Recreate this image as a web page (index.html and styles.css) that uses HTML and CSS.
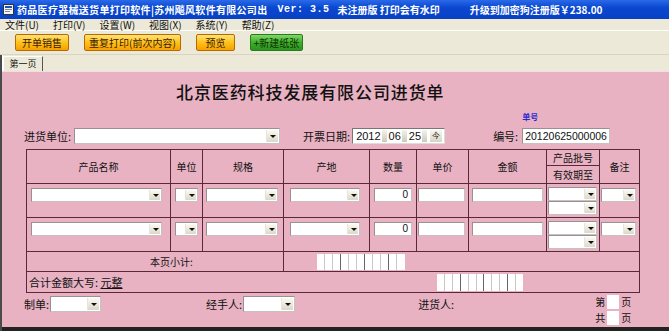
FILE: index.html
```html
<!DOCTYPE html>
<html lang="zh">
<head>
    <meta charset="UTF-8">
    <title>药品医疗器械送货单打印软件</title>
    <link rel="stylesheet" href="styles.css">
</head>
<body>

    <div class="titlebar">
        <svg class="app-icon" width="11" height="11" viewBox="0 0 11 11">
            <rect x="0.5" y="0.5" width="10" height="10" fill="#f4f4f4" stroke="#333"/>
            <rect x="2" y="2" width="7" height="2" fill="#2050c0"/>
            <rect x="2" y="5" width="7" height="1" fill="#888"/>
            <rect x="2" y="7" width="5" height="1" fill="#888"/>
        </svg>
        <span class="t-name">药品医疗器械送货单打印软件|苏州飚风软件有限公司出</span>
        <span class="t-ver">Ver: 3.5</span>
        <span class="t-reg">未注册版 打印会有水印</span>
        <span class="t-up">升级到加密狗注册版￥238.00</span>
    </div>

    <div class="menubar">
        <span>文件(U)</span>
        <span>打印(V)</span>
        <span>设置(W)</span>
        <span>视图(X)</span>
        <span>系统(Y)</span>
        <span>帮助(Z)</span>
    </div>

    <div class="toolbar">
        <button class="btn w54">开单销售</button>
        <button class="btn w97">重复打印(前次内容)</button>
        <button class="btn w39">预览</button>
        <button class="btn green w53">+新建纸张</button>
    </div>

    <div class="frame">
        <div class="tabs">
            <div class="tab">第一页</div>
        </div>

        <div class="panel">
            <h1 class="doc-title">北京医药科技发展有限公司进货单</h1>

            <div class="info">
                <span class="lbl">进货单位:</span>
                <div class="sel w206"><span class="arr"></span></div>
                <span class="lbl date-lbl">开票日期:</span>
                <div class="date">
                    <span>2012</span><span class="spin"></span>
                    <span>06</span><span class="spin"></span>
                    <span>25</span><span class="spin"></span>
                    <span class="today">今</span>
                </div>
                <span class="lbl no-lbl">编号:</span>
                <div class="no-wrap">
                    <span class="no-tag">单号</span>
                    <div class="inp no-inp">20120625000006</div>
                </div>
            </div>

            <table class="grid">
                <colgroup>
                    <col style="width:144px">
                    <col style="width:32px">
                    <col style="width:81px">
                    <col style="width:86px">
                    <col style="width:47px">
                    <col style="width:52px">
                    <col style="width:78px">
                    <col style="width:53px">
                    <col style="width:40px">
                </colgroup>
                <tr class="head">
                    <th rowspan="2">产品名称</th>
                    <th rowspan="2">单位</th>
                    <th rowspan="2">规格</th>
                    <th rowspan="2">产地</th>
                    <th rowspan="2">数量</th>
                    <th rowspan="2">单价</th>
                    <th rowspan="2">金额</th>
                    <th>产品批号</th>
                    <th rowspan="2">备注</th>
                </tr>
                <tr class="head2">
                    <th>有效期至</th>
                </tr>
                <tr class="item">
                    <td><div class="sel c-name"><span class="arr"></span></div></td>
                    <td><div class="sel c-unit"><span class="arr"></span></div></td>
                    <td><div class="sel c-spec"><span class="arr"></span></div></td>
                    <td><div class="sel c-place"><span class="arr"></span></div></td>
                    <td><div class="inp c-qty">0</div></td>
                    <td><div class="inp c-price"></div></td>
                    <td><div class="inp c-amount"></div></td>
                    <td class="batch">
                        <div class="sel c-batch"><span class="arr"></span></div>
                        <div class="sel c-batch"><span class="arr"></span></div>
                    </td>
                    <td><div class="sel c-note"><span class="arr"></span></div></td>
                </tr>
                <tr class="item">
                    <td><div class="sel c-name"><span class="arr"></span></div></td>
                    <td><div class="sel c-unit"><span class="arr"></span></div></td>
                    <td><div class="sel c-spec"><span class="arr"></span></div></td>
                    <td><div class="sel c-place"><span class="arr"></span></div></td>
                    <td><div class="inp c-qty">0</div></td>
                    <td><div class="inp c-price"></div></td>
                    <td><div class="inp c-amount"></div></td>
                    <td class="batch">
                        <div class="sel c-batch"><span class="arr"></span></div>
                        <div class="sel c-batch"><span class="arr"></span></div>
                    </td>
                    <td><div class="sel c-note"><span class="arr"></span></div></td>
                </tr>
                <tr class="sub">
                    <td colspan="3" class="sub-lbl">本页小计:</td>
                    <td colspan="6">
                        <div class="digits sub-digits">
                            <i></i><i></i><i class="k"></i><i></i><i></i><i class="k"></i><i></i><i></i><i class="k"></i><i></i><i></i>
                        </div>
                    </td>
                </tr>
                <tr class="total">
                    <td colspan="9">
                        <div class="total-row">
                            <span>合计金额大写: <u>元整</u></span>
                            <div class="digits total-digits">
                                <i></i><i></i><i class="k"></i><i></i><i></i><i class="k"></i><i></i><i></i><i class="k"></i><i></i><i></i>
                            </div>
                        </div>
                    </td>
                </tr>
            </table>

            <div class="foot">
                <span class="lbl">制单:</span>
                <div class="sel w51"><span class="arr"></span></div>
                <span class="lbl f-hand">经手人:</span>
                <div class="sel w52"><span class="arr"></span></div>
                <span class="lbl f-recv">进货人:</span>
                <div class="pages">
                    <div class="pg">第<span class="pg-box"></span>页</div>
                    <div class="pg">共<span class="pg-box"></span>页</div>
                </div>
            </div>
        </div>
    </div>

</body>
</html>
```

FILE: styles.css
```css
body {
    margin: 0;
    width: 669px;
    height: 331px;
    overflow: hidden;
    background-color: #ece9d8;
    font-family: "Noto Sans CJK SC", "Liberation Sans", sans-serif;
    font-size: 11px;
    color: #111;
}

/* title bar */
.titlebar {
    height: 19px;
    display: flex;
    align-items: center;
    background: linear-gradient(#2a6ae8, #0a48d0 40%, #0840c4);
    color: #fff;
    font-size: 10px;
    font-weight: bold;
    white-space: nowrap;
    padding-left: 3px;
}
.app-icon { margin-right: 3px; }
.t-name { letter-spacing: 0.3px; }
.t-ver { margin-left: 10px; font-family: "Liberation Mono", monospace; font-size: 10px; letter-spacing: 0.5px; }
.t-reg { margin-left: 8px; }
.t-up { margin-left: 30px; }

/* menu */
.menubar {
    height: 11px;
    display: flex;
    align-items: center;
    gap: 14px;
    padding-left: 5px;
    font-size: 10px;
    line-height: 11px;
    border-bottom: 1px solid #fff;
}

/* toolbar */
.toolbar {
    height: 23px;
    display: flex;
    align-items: center;
    gap: 15px;
    padding-left: 15px;
    border-bottom: 1px solid #d8d4c0;
}
.btn {
    height: 17px;
    padding: 0;
    border: 1px solid #b86a00;
    border-radius: 2px;
    background: linear-gradient(#ffe27a, #ffc21a 50%, #f4a000);
    font-family: "Noto Sans CJK SC", sans-serif;
    font-size: 10px;
    line-height: 15px;
    color: #3a1a00;
}
.btn.green {
    border-color: #2d7a1e;
    background: linear-gradient(#7fd86a, #3fae2c 50%, #2a9420);
    color: #103000;
}
.w54 { width: 54px; }
.w97 { width: 97px; }
.w39 { width: 39px; }
.w53 { width: 53px; }

/* frame & tabs */
.frame {
    border-left: 2px solid #4a4a4a;
    box-shadow: inset 1px 0 0 #fff;
}
.tabs {
    height: 16px;
    display: flex;
    align-items: flex-end;
    padding-left: 1px;
}
.tab {
    height: 14px;
    width: 38px;
    border: 1px solid #fff;
    border-right-color: #555;
    border-bottom: none;
    font-size: 9px;
    line-height: 14px;
    text-align: center;
}

.panel {
    height: 260px;
    background-color: #e8b2c3;
    border-top: 1px solid #f4dce4;
    border-bottom: 4px solid #222;
    padding-left: 22px;
    box-sizing: border-box;
}

.doc-title {
    margin: 0;
    padding: 9px 0 0 152px;
    height: 37px;
    box-sizing: border-box;
    font-size: 17px;
    font-weight: 500;
    letter-spacing: 0.9px;
    line-height: 22px;
    color: #111;
}

/* info row */
.info {
    height: 40px;
    box-sizing: border-box;
    display: flex;
    align-items: flex-end;
    padding-bottom: 5px;
}
.lbl { white-space: nowrap; line-height: 16px; }
.date-lbl { margin-left: 23px; }
.no-lbl { margin-left: 48px; }

.sel {
    position: relative;
    height: 16px;
    box-sizing: border-box;
    background-color: #fff;
    border: 1px solid #c8c0c4;
    border-top-color: #9a9094;
    border-left-color: #9a9094;
}
.arr {
    position: absolute;
    right: 1px;
    top: 1px;
    bottom: 1px;
    width: 11px;
    background: linear-gradient(#fbfaf4, #dcd8c8);
    border-left: 1px solid #e8e4d8;
}
.arr::after {
    content: "";
    position: absolute;
    left: 3px;
    top: 50%;
    margin-top: -1px;
    border-left: 3px solid transparent;
    border-right: 3px solid transparent;
    border-top: 3px solid #111;
}
.inp {
    height: 16px;
    box-sizing: border-box;
    background-color: #fff;
    border: 1px solid #c8c0c4;
    border-top-color: #9a9094;
    border-left-color: #9a9094;
}

.info .sel { margin-left: 3px; }
.w206 { width: 206px; }

.date {
    margin-left: 2px;
    width: 93px;
    height: 16px;
    box-sizing: border-box;
    display: flex;
    align-items: center;
    gap: 1px;
    background-color: #fff;
    border: 1px solid #777;
    border-right-color: #ddd;
    border-bottom-color: #ddd;
    font-family: "Liberation Sans", sans-serif;
    font-size: 11px;
    padding-left: 3px;
}
.spin {
    width: 5px;
    height: 12px;
    background: linear-gradient(#f4f2ea, #cfcab8);
    margin-right: 1px;
}
.today {
    width: 12px;
    height: 12px;
    font-size: 8px;
    line-height: 12px;
    text-align: center;
    background: linear-gradient(#f8f6ee, #d8d4c4);
    margin-left: 1px;
}

.no-wrap { position: relative; margin-left: 4px; }
.no-tag {
    position: absolute;
    left: 0;
    top: -17px;
    color: #2a2ad0;
    font-size: 8px;
    font-weight: bold;
}
.no-inp {
    width: 88px;
    font-family: "Liberation Sans", sans-serif;
    font-size: 10.5px;
    line-height: 14px;
    padding-left: 2px;
    color: #111;
}

/* grid */
.grid {
    border-collapse: collapse;
    table-layout: fixed;
    width: 613px;
    margin-left: 2px;
}
.grid th,
.grid td {
    border: 1px solid #5a2838;
    padding: 0;
    font-weight: normal;
    font-size: 10px;
    line-height: 13px;
}
.grid tr.head { height: 16px; }
.grid tr.head2 { height: 18px; }
.grid tr.item { height: 34px; }
.grid tr.sub { height: 20px; }
.grid tr.total { height: 21px; }

.grid .item td {
    vertical-align: top;
    padding-top: 4px;
}
.grid .item .sel,
.grid .item .inp {
    height: 14px;
}
.grid .item .arr { width: 10px; }

.c-name { width: 131px; margin-left: 4px; }
.c-unit { width: 23px; margin-left: 4px; }
.c-spec { width: 72px; margin-left: 3px; }
.c-place { width: 70px; margin-left: 6px; }
.c-qty {
    width: 38px;
    margin-left: 4px;
    text-align: right;
    padding-right: 3px;
    font-family: "Liberation Sans", sans-serif;
    font-size: 10px;
    line-height: 12px;
}
.c-price { width: 47px; margin-left: 1px; }
.c-amount { width: 71px; margin-left: 3px; }
.c-batch { width: 49px; margin-left: 1px; }
.grid .item td.batch { padding-top: 3px; }
.c-note { width: 35px; margin-left: 1px; }

.grid .sub td { vertical-align: middle; }
.sub-lbl { padding-left: 123px !important; }

.digits {
    display: flex;
    height: 16px;
    background-color: #fff;
}
.digits i {
    width: 7px;
    border-right: 1px solid #c8c8c8;
}
.digits i.k { border-right-color: #666; }
.digits i:last-child { border-right: none; }
.sub-digits { margin-left: 33px; width: 88px; }

.total-row {
    display: flex;
    align-items: center;
    padding-left: 2px;
}
.total-row span { font-size: 11px; width: 408px; }
.total-digits { width: 86px; height: 17px; }

/* footer */
.foot {
    display: flex;
    align-items: flex-start;
    height: 35px;
    padding-top: 1px;
    box-sizing: border-box;
}
.foot .lbl { margin-top: 2px; }
.foot .sel { margin-top: 2px; margin-left: 1px; }
.w51 { width: 51px; }
.w52 { width: 52px; }
.f-hand { margin-left: 105px; }
.f-recv { margin-left: 123px; }
.pages {
    margin-left: 141px;
    display: flex;
    flex-direction: column;
    gap: 1px;
}
.pg {
    display: flex;
    align-items: center;
    font-size: 10px;
    line-height: 14px;
    height: 15px;
}
.pg-box {
    width: 12px;
    height: 14px;
    background-color: #fff;
    margin: 0 2px;
}
```
